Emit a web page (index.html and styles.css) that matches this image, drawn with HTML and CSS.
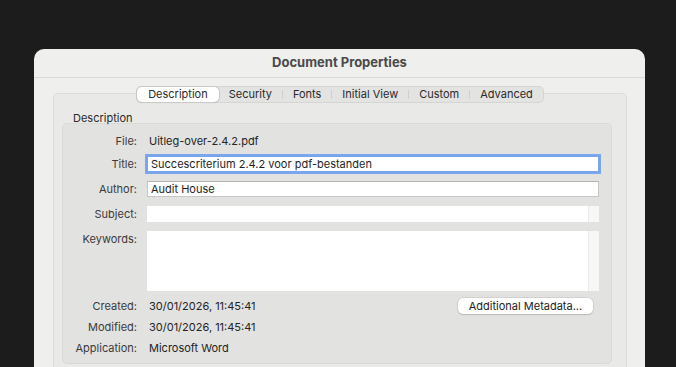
FILE: index.html
```html
<!DOCTYPE html>
<html lang="en">
<head>
    <meta charset="UTF-8">
    <meta name="viewport" content="width=device-width, initial-scale=1.0">
    <title>Document Properties</title>
    <link rel="stylesheet" href="styles.css">
</head>
<body>
    <div class="window">
        <div class="titlebar">Document Properties</div>

        <div class="window-body">
            <!-- Tabs -->
            <div class="tabs">
                <div class="tab active">Description</div>
                <div class="tab">Security</div>
                <div class="sep"></div>
                <div class="tab">Fonts</div>
                <div class="sep"></div>
                <div class="tab">Initial View</div>
                <div class="sep"></div>
                <div class="tab">Custom</div>
                <div class="sep"></div>
                <div class="tab">Advanced</div>
            </div>

            <div class="tab-box">
                <div class="group-label">Description</div>
                <div class="group">
                    <div class="row row-file">
                        <div class="label">File:</div>
                        <div class="value">Uitleg-over-2.4.2.pdf</div>
                    </div>
                    <div class="row row-title">
                        <div class="label">Title:</div>
                        <div class="field focused">Succescriterium 2.4.2 voor pdf-bestanden</div>
                    </div>
                    <div class="row row-field">
                        <div class="label">Author:</div>
                        <div class="field">Audit House</div>
                    </div>
                    <div class="row row-field">
                        <div class="label">Subject:</div>
                        <div class="field plain"><span class="track"></span></div>
                    </div>
                    <div class="row row-keywords">
                        <div class="label">Keywords:</div>
                        <div class="field plain tall"><span class="track"></span></div>
                    </div>
                    <div class="row row-info">
                        <div class="label">Created:</div>
                        <div class="value">30/01/2026, 11:45:41</div>
                        <button class="btn">Additional Metadata...</button>
                    </div>
                    <div class="row row-info">
                        <div class="label">Modified:</div>
                        <div class="value">30/01/2026, 11:45:41</div>
                    </div>
                    <div class="row row-info">
                        <div class="label">Application:</div>
                        <div class="value">Microsoft Word</div>
                    </div>
                </div>
            </div>
        </div>
    </div>
</body>
</html>
```

FILE: styles.css
```css
body {
    font-family: 'Inter', 'Noto Sans', sans-serif;
    font-size: 11px;
    background: #1c1c1c;
    margin: 0;
    height: 367px;
    overflow: hidden;
}

.window {
    margin: 49px 0 0 34px;
    width: 611px;
    height: 318px;
    background: #efefed;
    border-radius: 10px 10px 0 0;
    overflow: hidden;
}

.titlebar {
    height: 28px;
    line-height: 27px;
    border-bottom: 1px solid #d9d9d8;
    text-align: center;
    font-size: 13px;
    font-weight: 700;
    color: #4a4a4a;
}

.window-body {
    padding: 8px 18px 0 19px;
}

/* Segmented tabs */
.tabs {
    position: relative;
    z-index: 1;
    display: flex;
    align-items: center;
    width: fit-content;
    height: 15px;
    margin: 0 auto -10px;
    background: #e3e3e2;
    border: 1px solid #d5d5d4;
    border-radius: 5px;
    color: #2a2a2a;
}

.tab {
    padding: 0 10px;
    line-height: 15px;
}

.tab.active {
    background: #fff;
    border-radius: 5px;
    box-shadow: 0 0 0 1px #c9c9c9, 0 1px 1px rgba(0, 0, 0, 0.15);
    padding: 0 11px;
}

.sep {
    width: 1px;
    height: 9px;
    background: #cfcfcf;
}

.tab-box {
    height: 260px;
    background: #e9e9e8;
    border: 1px solid #dcdcdb;
    border-radius: 5px;
    padding: 19px 14px 0 8px;
}

.group-label {
    margin-left: 11px;
    color: #2a2a2a;
    line-height: 10px;
}

.group {
    background: #e2e2e1;
    border: 1px solid #d9d9d8;
    border-radius: 5px;
    padding: 8px 12px 6px 0;
}

.row {
    display: flex;
    align-items: center;
}

.label {
    width: 74px;
    text-align: right;
    color: #3a3a3a;
    flex-shrink: 0;
}

.value {
    margin-left: 12px;
    color: #242424;
}

.row-file {
    height: 18px;
}

.row-title {
    margin-top: 6px;
    height: 16px;
}

.row-field {
    margin-top: 9px;
    height: 16px;
}

.row-keywords {
    margin-top: 9px;
    height: 60px;
    align-items: flex-start;
}

.row-keywords .label {
    margin-top: 1px;
}

.row-info {
    height: 18px;
    margin-top: 3px;
}

.row-keywords + .row-info {
    margin-top: 6px;
}

.field {
    position: relative;
    flex: 1;
    margin-left: 10px;
    height: 16px;
    line-height: 15px;
    box-sizing: border-box;
    background: #fff;
    border: 1px solid #c6c6c6;
    border-top-color: #b5b5b5;
    padding: 0 3px;
    color: #1e1e1e;
}

.field.focused {
    border: 1px solid #7aa5e6;
    box-shadow: 0 0 0 2px #79a6ee;
}

.field.plain {
    border: none;
}

.field.tall {
    height: 60px;
}

.track {
    position: absolute;
    top: 0;
    right: 0;
    bottom: 0;
    width: 10px;
    background: #f7f7f7;
    border-left: 1px solid #e8e8e8;
}

.btn {
    margin-left: auto;
    margin-right: 6px;
    width: 135px;
    height: 16px;
    padding: 0;
    font-family: inherit;
    font-size: 11px;
    color: #222;
    background: #fff;
    border: none;
    border-radius: 5px;
    box-shadow: 0 0 0 0.5px #bdbdbd, 0 1px 1px rgba(0, 0, 0, 0.18);
}
```
